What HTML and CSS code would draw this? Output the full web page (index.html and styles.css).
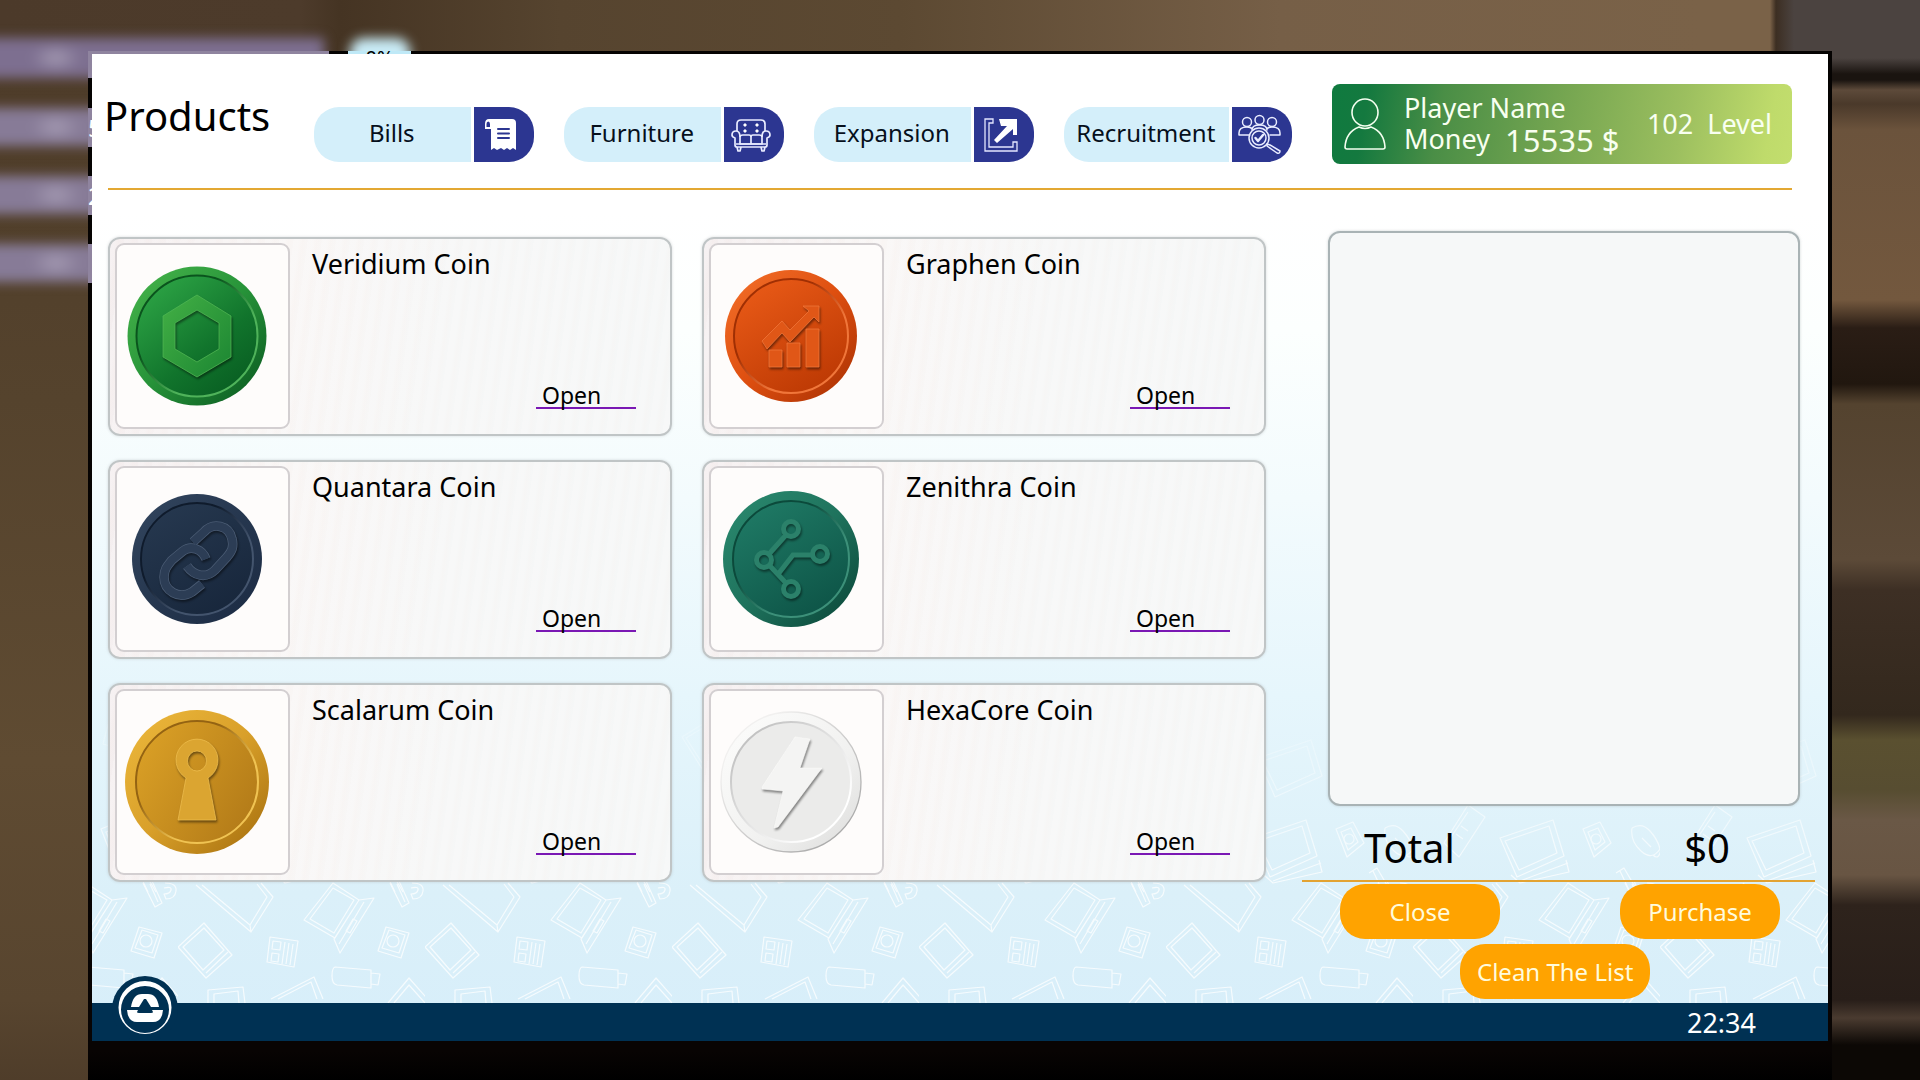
FILE: index.html
```html
<!DOCTYPE html>
<html lang="en">
<head>
<meta charset="utf-8">
<meta name="viewport" content="width=device-width, initial-scale=1">
<title>Products</title>
<link rel="stylesheet" href="styles.css">
</head>
<body>
<div class="scene">
  <div class="hud" aria-hidden="true">
    <div class="hud-glow hud-glow-1"></div>
    <div class="hud-glow hud-glow-2"></div>
    <div class="hud-glow hud-glow-3"></div>
    <div class="hud-glow hud-glow-4"></div>
    <div class="hud-glow hud-percent-glow"></div>
  </div>
  <div class="frame">
    <div class="hud-edge" aria-hidden="true">
      <div class="hud-bar hud-bar-1"></div>
      <div class="hud-bar hud-bar-2">5</div>
      <div class="hud-bar hud-bar-3">2</div>
      <div class="hud-bar hud-bar-4"></div>
      <div class="hud-percent">0%</div>
    </div>
    <div class="window">
      <svg class="wallpaper" aria-hidden="true">
        <defs>
          <pattern id="gadgets" width="247" height="320" patternUnits="userSpaceOnUse" x="86" y="0">
            <g fill="none" stroke="#fff" stroke-width="1.2" stroke-linejoin="round">
              <path d="M26 240 0 264l28 31 26-23zM26 245 5 264l20 23 21-20zM28 290l22-21"/>
              <path d="M18 202l55 47 22-35-12-14M24 202l48 40 17-28-10-13M73 249l-1-7"/>
              <path d="M92 254l28 4-4 26-27-5zM95 258l8 1-1 8-8-1zM107 259l-3 22M111 260l-3 21M115 261l-3 21M94 270l7 1-1 8-7-1z"/>
              <path d="M155 200l-29 37 31 18 24-38zM181 217l15-2-34 55-6-14zM155 205l-23 31 24 14 20-33zM186 219l-25 42M175 236l4 2-7 12-4-2z"/>
              <path d="M157 284l36 3v18l-34-3q-5-1-5-9t3-9zM193 290l9 1-2 11-7-1z"/>
              <path d="M208 244l23 6-8 25-23-7zM211 247l16 5-6 18-17-5z"/><circle cx="215" cy="258" r="6"/>
              <path d="M212 200l12 24 7-4-10-22M219 201l8 18M234 200q12 0 11 8t-10 8l-2-5q6 0 7-4t-7-2"/>
              <path d="M30 320v-13l35-3 2 16M36 320v-9l24-3 1 12"/>
              <path d="M93 316l43-22 9 22M100 316l33-17 6 17"/>
              <path d="M210 320l21-25 22 25M216 320l15-18 16 18"/>
              <path d="M87 155l53-18 11 36-47 21zM92 158l44-15 8 27-38 17zM107 198l48-18M98 192l9 8 49-11-3-12"/>
              <path d="M170 146l17-7 11 21-17 14zM175 149l10-4 7 14-10 8z"/><circle cx="183" cy="156" r="5"/>
              <path d="M219 145q10-6 18 3t10 18q-8 12-19 2t-9-23M240 172q6 6 8-6M229 155l9 9"/>
              <path d="M31 160l24-38 17 12-26 40zM36 157l19-28M48 143l7 5M43 151l7 5"/>
              <path d="M203 190l8-5 14 24M207 188l10 21"/>
              <path d="M92 75l53-18 11 36-47 21zM97 78l44-15 8 27-38 17z"/>
              <path d="M10 54l32-20 24 36-32 22zM14 55l27-16 19 30-26 17z"/>
              <path d="M180 30l36 12-8 30-36-11zM184 35l27 9-6 23-27-8z"/>
              <path d="M200 90l32-8-4 10-27 8zM203 106l32-8M206 112l30-7"/>
            </g>
          </pattern>
        </defs>
        <rect width="100%" height="320" fill="url(#gadgets)"/>
      </svg>
      <div class="content">
        <header class="header">
          <h1 class="title">Products</h1>
          <nav class="tabs">
            <button class="tab" type="button">
              <span class="tab-label">Bills</span>
              <svg class="tab-icon" viewBox="0 0 60 55" aria-hidden="true">
                <path fill="#fff" d="M14 12h24q4 0 4 4v27l-3-2-3 2-3-2-3 2-3-2-4 2-3-2-3 2V22h-6v-5q0-5 4-5z"/>
                <path d="M12.500 20v-3q0-2.500 1.700-2.500T16 17v3z" fill="#2c3691"/>
                <path d="M24 22h11M24 26.500h11M24 31h11" stroke="#2c3691" stroke-width="2" stroke-linecap="round"/>
              </svg>
            </button>
            <button class="tab" type="button">
              <span class="tab-label">Furniture</span>
              <svg class="tab-icon" viewBox="0 0 60 55" aria-hidden="true" fill="none" stroke="#e9ecff" stroke-width="1.700" stroke-linejoin="round">
                <path d="M13 24v-7q0-4 4-4h20q4 0 4 4v7M27 29v8M16 30q0-2 3-2h6q2 0 2 2 0-2 2-2h6q3 0 3 2v7H16z"/>
                <path d="M16 30q0-6-4-6-4 0-4 4 0 2 3 3v7q0 2 2 2h28q2 0 2-2v-7q3-1 3-3 0-4-4-4t-4 6M13 40l1 4h2l1-4M37 40l1 4h2l1-4M12 37h30"/>
                <path fill="#fff" stroke="none" d="M19 18l2-2 2 2-2 2zM31 18l2-2 2 2-2 2zM19 24l2-2 2 2-2 2zM31 24l2-2 2 2-2 2z"/>
              </svg>
            </button>
            <button class="tab" type="button">
              <span class="tab-label">Expansion</span>
              <svg class="tab-icon" viewBox="0 0 60 55" aria-hidden="true">
                <path d="M19 12h-8v32h32v-9h-4v5H15V16h4z" fill="none" stroke="#e3e6ff" stroke-width="1.300"/>
                <path fill="#fff" d="M25 12h18v16h-4v-6L23 36l-3-3 13-14h-6z"/>
              </svg>
            </button>
            <button class="tab" type="button">
              <span class="tab-label">Recruitment</span>
              <svg class="tab-icon" viewBox="0 0 60 55" aria-hidden="true" fill="none" stroke="#e9ecff" stroke-width="1.500" stroke-linecap="round" stroke-linejoin="round">
                <circle cx="27.500" cy="13" r="4.500"/><circle cx="15" cy="15" r="4.500"/><circle cx="40" cy="15" r="4.500"/>
                <path d="M17 28H7v-2q0-6 8-6 4 0 5 2M38 28h10v-2q0-6-8-6-4 0-5 2M20 23q0-5 7.500-5t7.500 5"/>
                <circle cx="27" cy="31" r="10"/><circle cx="27" cy="31" r="7"/>
                <path d="M35 37l3 1 10 6q0 3-3 2l-10-7z"/><path d="M23.500 31l2.500 3 5-6" stroke-width="2.500"/>
              </svg>
            </button>
          </nav>
          <section class="player" aria-label="Player">
            <svg class="avatar" viewBox="0 0 44 54" aria-hidden="true" fill="none" stroke="#f4fff0" stroke-width="1.600">
              <ellipse cx="22" cy="15.500" rx="13" ry="13.500"/>
              <path d="M16 30q-13 5-14 20 0 2 2 2h36q2 0 2-2-1-15-14-20-6 3-12 0z"/>
            </svg>
            <div class="player-info">
              <span>Player Name</span>
              <span class="money">Money <strong class="amount">15535 $</strong></span>
            </div>
            <div class="level"><span>102</span><span>Level</span></div>
          </section>
        </header>
        <hr class="rule">
        <main class="main">
          <section class="products" aria-label="Coins">
            <article class="card">
              <div class="thumb">
                <svg class="coin" viewBox="-75 -75 150 150" aria-hidden="true">
                  <defs>
                    <linearGradient id="g1" x1="0" y1="0" x2="1" y2="1"><stop offset="0" stop-color="#48b64c"/><stop offset=".5" stop-color="#279339"/><stop offset="1" stop-color="#08551f"/></linearGradient>
                    <linearGradient id="g1b" x1=".1" y1="0" x2=".9" y2="1"><stop offset="0" stop-color="#2fa847"/><stop offset=".6" stop-color="#11742c"/><stop offset="1" stop-color="#075a20"/></linearGradient>
                    <linearGradient id="g1r" x1="0" y1="0" x2="1" y2="1"><stop offset=".35" stop-color="#0a541d"/><stop offset=".65" stop-color="#4fb35a"/></linearGradient>
                    <linearGradient id="g1e" x1="0" y1="0" x2="1" y2="1"><stop offset="0" stop-color="#43b045"/><stop offset="1" stop-color="#1b8532"/></linearGradient>
                  </defs>
                  <circle r="69.500" fill="url(#g1)"/>
                  <circle class="rim" r="60.500" fill="url(#g1b)" stroke="url(#g1r)"/>
                  <path class="emblem" fill="url(#g1e)" fill-rule="evenodd" stroke="#4fb653" stroke-width=".8" d="M0-41 34-20V21L0 41-34 21V-20zM0-26-22-13V13L0 26 22 13V-13z"/>
                </svg>
              </div>
              <div class="info"><h2 class="name">Veridium Coin</h2><a class="open" href="#veridium">Open</a></div>
            </article>
            <article class="card">
              <div class="thumb">
                <svg class="coin" viewBox="-75 -75 150 150" aria-hidden="true">
                  <defs>
                    <linearGradient id="g2" x1="0" y1="0" x2="1" y2="1"><stop offset="0" stop-color="#f4712b"/><stop offset=".5" stop-color="#de4f10"/><stop offset="1" stop-color="#a62f02"/></linearGradient>
                    <linearGradient id="g2b" x1=".2" y1="0" x2=".8" y2="1"><stop offset="0" stop-color="#e95a17"/><stop offset="1" stop-color="#bb3803"/></linearGradient>
                    <linearGradient id="g2r" x1="0" y1="0" x2="1" y2="1"><stop offset=".35" stop-color="#a02f03"/><stop offset=".65" stop-color="#f0763a"/></linearGradient>
                  </defs>
                  <circle r="66" fill="url(#g2)"/>
                  <circle class="rim" r="57" fill="url(#g2b)" stroke="url(#g2r)"/>
                  <g class="emblem" fill="#e05717" stroke="#f0763a" stroke-width=".8">
                    <path d="M-22 14h13v17h-13zM-4 7h13v24H-4zM15-7h13v38H15z"/>
                    <path d="M-29 5-9-15l8 9 19-19-6-5h16v16l-5-5-24 25-8-9-15 16z"/>
                  </g>
                </svg>
              </div>
              <div class="info"><h2 class="name">Graphen Coin</h2><a class="open" href="#graphen">Open</a></div>
            </article>
            <article class="card">
              <div class="thumb">
                <svg class="coin" viewBox="-75 -75 150 150" aria-hidden="true">
                  <defs>
                    <linearGradient id="g3" x1="0" y1="0" x2="1" y2="1"><stop offset="0" stop-color="#33465f"/><stop offset=".5" stop-color="#26374f"/><stop offset="1" stop-color="#1b2a42"/></linearGradient>
                    <linearGradient id="g3b" x1=".2" y1="0" x2=".8" y2="1"><stop offset="0" stop-color="#26384f"/><stop offset="1" stop-color="#17263b"/></linearGradient>
                    <linearGradient id="g3r" x1="0" y1="0" x2="1" y2="1"><stop offset=".35" stop-color="#0f1b2c"/><stop offset=".65" stop-color="#43546d"/></linearGradient>
                  </defs>
                  <circle r="65" fill="url(#g3)"/>
                  <circle class="rim" r="56" fill="url(#g3b)" stroke="url(#g3r)"/>
                  <g class="emblem" fill="none">
                    <g stroke="#4b5c74" stroke-width="9.500"><path d="M-4-17 7-27C16-37 32-34 35-20 37-12 35-8 30-2L18 11C9 20-3 17-10 7"/><path d="M5 25-5 33C-18 41-33 32-33 18-33 10-29 6-25 1L-14-8C-6-14 5-10 9 0"/></g>
                    <g stroke="#2c3d55" stroke-width="8"><path d="M-4-17 7-27C16-37 32-34 35-20 37-12 35-8 30-2L18 11C9 20-3 17-10 7"/><path d="M5 25-5 33C-18 41-33 32-33 18-33 10-29 6-25 1L-14-8C-6-14 5-10 9 0"/></g>
                  </g>
                </svg>
              </div>
              <div class="info"><h2 class="name">Quantara Coin</h2><a class="open" href="#quantara">Open</a></div>
            </article>
            <article class="card">
              <div class="thumb">
                <svg class="coin" viewBox="-75 -75 150 150" aria-hidden="true">
                  <defs>
                    <linearGradient id="g4" x1="0" y1="0" x2="1" y2="1"><stop offset="0" stop-color="#2b8b70"/><stop offset=".5" stop-color="#1f735d"/><stop offset="1" stop-color="#094336"/></linearGradient>
                    <linearGradient id="g4b" x1=".2" y1="0" x2=".8" y2="1"><stop offset="0" stop-color="#1f7a65"/><stop offset="1" stop-color="#0d5346"/></linearGradient>
                    <linearGradient id="g4r" x1="0" y1="0" x2="1" y2="1"><stop offset=".35" stop-color="#0b4a3b"/><stop offset=".65" stop-color="#3c9079"/></linearGradient>
                  </defs>
                  <circle r="68" fill="url(#g4)"/>
                  <circle class="rim" r="58" fill="url(#g4b)" stroke="url(#g4r)"/>
                  <g class="emblem" fill="none" stroke="#2b816a" stroke-width="5">
                    <path d="M-22-5-5-24M-21 7-5 24M-12 14 2-4H21"/>
                    <circle cy="-30" r="7.500"/><circle cx="29" cy="-5" r="7.500"/><circle cx="-27" cy="1" r="7.500"/><circle cy="30" r="7.500"/>
                  </g>
                </svg>
              </div>
              <div class="info"><h2 class="name">Zenithra Coin</h2><a class="open" href="#zenithra">Open</a></div>
            </article>
            <article class="card">
              <div class="thumb">
                <svg class="coin" viewBox="-75 -75 150 150" aria-hidden="true">
                  <defs>
                    <linearGradient id="g5" x1="0" y1="0" x2="1" y2="1"><stop offset="0" stop-color="#edb93c"/><stop offset=".5" stop-color="#d9a02a"/><stop offset="1" stop-color="#a36c0c"/></linearGradient>
                    <linearGradient id="g5b" x1="0" y1=".2" x2="1" y2=".8"><stop offset="0" stop-color="#daa026"/><stop offset="1" stop-color="#b27a18"/></linearGradient>
                    <linearGradient id="g5r" x1="0" y1="0" x2="1" y2="1"><stop offset=".35" stop-color="#946312"/><stop offset=".65" stop-color="#f0c352"/></linearGradient>
                  </defs>
                  <circle r="72" fill="url(#g5)"/>
                  <circle class="rim" r="61" fill="url(#g5b)" stroke="url(#g5r)"/>
                  <path class="emblem" fill="#dba531" fill-rule="evenodd" stroke="#edbd4c" stroke-width=".8" d="M-11-4A21 21 0 1 1 11-4L19 38H-19zM0-31A9.500 10 0 0 0 0-11 9.500 10 0 0 0 0-31z"/>
                </svg>
              </div>
              <div class="info"><h2 class="name">Scalarum Coin</h2><a class="open" href="#scalarum">Open</a></div>
            </article>
            <article class="card">
              <div class="thumb">
                <svg class="coin" viewBox="-75 -75 150 150" aria-hidden="true">
                  <defs>
                    <linearGradient id="g6" x1="0" y1="0" x2="1" y2="1"><stop offset="0" stop-color="#fdfdfc"/><stop offset=".6" stop-color="#f1f1f0"/><stop offset="1" stop-color="#dcdcdb"/></linearGradient>
                    <linearGradient id="g6s" x1="0" y1="0" x2="1" y2="1"><stop offset=".2" stop-color="#f1f0ef"/><stop offset="1" stop-color="#9b9b9b"/></linearGradient>
                    <linearGradient id="g6r" x1="0" y1="0" x2="1" y2="1"><stop offset="0" stop-color="#b5b5b5"/><stop offset=".8" stop-color="#fff"/></linearGradient>
                  </defs>
                  <circle r="70" fill="url(#g6)" stroke="url(#g6s)" stroke-width="1.300"/>
                  <circle class="rim" r="60" fill="#ebebea" stroke="url(#g6r)"/>
                  <path class="emblem" fill="#f4f4f3" stroke="#fbfbfa" stroke-width=".6" d="M4-45 19-43 9-14H31L-13 45-17 46-8 9-29 7V5z"/>
                </svg>
              </div>
              <div class="info"><h2 class="name">HexaCore Coin</h2><a class="open" href="#hexacore">Open</a></div>
            </article>
          </section>
          <aside class="cart" aria-label="Cart">
            <div class="cart-list"></div>
            <div class="total"><span>Total</span><span>$0</span></div>
            <div class="cart-actions">
              <button class="btn" type="button">Close</button>
              <button class="btn" type="button">Purchase</button>
            </div>
            <button class="btn btn-clean" type="button">Clean The List</button>
          </aside>
        </main>
        <footer class="taskbar">
          <button class="start" type="button" aria-label="Start">
            <svg viewBox="-33 -33 66 66" aria-hidden="true">
              <circle r="33" fill="#003153"/>
              <path fill="#fff" fill-rule="evenodd" d="M0-28A26 26 0 0 1 0 25 26 26 0 0 1 0-28zM0-23A24 23.500 0 0 0 0 24 24 23.500 0 0 0 0-23z"/>
              <path fill="#fff" d="M-14-2Q-12-15-3-15H3Q12-15 14-2H6L1-10H-1L-6-2zM-18 1H-7L-8 3Q-8 4-6 4H6Q8 4 8 3L7 1H18Q17 13 8 13H-8Q-17 13-18 1z"/>
            </svg>
          </button>
          <time class="clock">22:34</time>
        </footer>
      </div>
    </div>
  </div>
</div>
</body>
</html>
```
FILE: styles.css
```css
*, *::before, *::after { box-sizing: border-box; }

body {
  margin: 0;
  font-family: "Noto Sans", "Open Sans", sans-serif;
  color: #000;
  background: #0a0705;
}

h1, h2 { margin: 0; font-weight: 400; }

button {
  font: inherit;
  border: 0;
  padding: 0;
  cursor: pointer;
}

/* Blurred room behind the in-game monitor */
.scene {
  position: relative;
  min-height: 100vh;
  padding: 51px 88px 0;
  overflow: hidden;
  background:
    linear-gradient(180deg, #4b4340 0, #4b4340 58px, #1a1410 74px, #1a1410 80px, #5d4a3a 90px, #4a392a 104px, #6b533c 130px, #73583e 300px, #2a1d15 328px, #21170f 384px, #54432f 404px, #5c4a38 560px, #3d2f24 590px, #33281d 715px, #5a5030 740px, #574d31 790px, #6a5846 820px, #685543 875px, #2e231c 905px, #281e19 1000px, #4a3b30 1018px, #0c0805 1045px) right 0 top 0 / 92px 100% no-repeat,
    linear-gradient(90deg, #4c3a2c00, #3c2e22 6px, #4b4340 24px) right 0 top 0 / 150px 51px no-repeat,
    linear-gradient(90deg, #4c3a2a 0, #4d3b2b 300px, #453423 340px, #56442f 560px, #5c4932 900px, #765f47 1280px, #7a6248 1700px) left top / 100% 52px no-repeat,
    linear-gradient(180deg, #4d3b29, #55432d 400px, #5f4b32 760px, #58452f 1000px, #4f3d2a) left top / 88px 100% no-repeat,
    #0a0705;
}

.hud-glow {
  position: absolute;
  left: -20px;
  width: 120px;
  height: 38px;
  background: #877b97 radial-gradient(ellipse 26px 14px at 76px 50%, #a59bb3, #a59bb300);
  filter: blur(6px);
}
.hud-glow-1 { top: 38px; width: 344px; height: 40px; background-color: #7d6f90; }
.hud-glow-2 { top: 108px; }
.hud-glow-3 { top: 176px; }
.hud-glow-4 { top: 244px; }
.hud-percent-glow { left: 350px; top: 38px; width: 60px; height: 34px; border-radius: 14px; background: #c9ecf7; }

.frame {
  position: relative;
  padding: 3px 4px 39px;
  background: linear-gradient(180deg, #050302, #080403 1000px, #000);
}

/* Status bars that show along the monitor's edge */
.hud-edge { position: absolute; inset: 0; overflow: hidden; }
.hud-bar {
  position: absolute;
  left: 0;
  width: 40px;
  height: 39px;
  background: #8f849f;
  color: #fff;
  font-size: 24px;
  line-height: 39px;
}
.hud-bar-1 { top: 0; width: 241px; height: 27px; }
.hud-bar-2 { top: 57px; }
.hud-bar-3 { top: 125px; }
.hud-bar-4 { top: 193px; }
.hud-percent {
  position: absolute;
  left: 260px;
  top: 0;
  width: 63px;
  height: 24px;
  background: #bfe9f7;
  font-size: 20px;
  line-height: 14px;
  text-align: center;
}

.window {
  position: relative;
  display: grid;
  min-height: calc(100vh - 93px);
  background: linear-gradient(180deg, #fff 0, #fff 16%, #fcfffe 28%, #f3fbfd 45%, #e6f6fc 65%, #dbf0f9 85%, #d7eefa 100%);
}
.wallpaper {
  grid-area: 1 / 1;
  align-self: end;
  width: 100%;
  height: 320px;
  margin-bottom: 38px;
  opacity: .75;
  mask-image: linear-gradient(180deg, transparent, #000 60%);
}
.content {
  grid-area: 1 / 1;
  position: relative;
  display: flex;
  flex-direction: column;
  min-width: 0;
}

.header {
  display: flex;
  align-items: flex-start;
  height: 134px;
  padding: 30px 36px 0 12px;
}
.title {
  margin-top: 5px;
  font-size: 40px;
  line-height: 54px;
}
.tabs {
  display: flex;
  gap: 30px;
  margin: 23px 0 0 44px;
}
.tab {
  display: flex;
  gap: 3px;
  min-width: 220px;
  height: 55px;
  background: none;
  color: #06101c;
}
.tab-label {
  flex: 1;
  padding: 0 14px 0 12px;
  border-radius: 25px 0 0 25px;
  background: #d4effa;
  font-size: 24px;
  line-height: 52px;
  height: 55px;
}
.tab-icon {
  width: 60px;
  height: 55px;
  border-radius: 0 25px 25px 0;
  background: #2c3691;
}

.player {
  display: flex;
  align-items: center;
  width: 460px;
  height: 80px;
  margin-left: auto;
  padding: 0 20px 0 11px;
  border-radius: 8px;
  background: linear-gradient(100deg, #0f7a3f 0, #14793f 8%, #4a8e46 24%, #76a651 50%, #9cbf5f 75%, #bfdb6b 94%, #c3de6e);
  color: #f8fff0;
  font-size: 27px;
  line-height: 31px;
}
.avatar { width: 44px; height: 54px; }
.player-info {
  display: flex;
  flex-direction: column;
  margin-left: 17px;
  white-space: nowrap;
}
.money { display: flex; gap: 15px; }
.amount { font-size: 31px; font-weight: 400; line-height: 34px; }
.level {
  display: flex;
  gap: 14px;
  margin-left: auto;
  padding-bottom: 2px;
}

.rule {
  width: auto;
  height: 2px;
  margin: 0 36px 0 16px;
  border: 0;
  background: #e3a832;
}

.main {
  flex: 1;
  display: grid;
  grid-template-columns: minmax(0, 1fr) 513px;
  gap: 36px;
  padding: 41px 13px 4px 16px;
}
.products {
  display: grid;
  grid-template-columns: 1fr 1fr;
  gap: 24px 30px;
  align-content: start;
  padding-top: 6px;
}
.card {
  display: flex;
  gap: 22px;
  min-height: 199px;
  padding: 4px 34px 5px 5px;
  border: 2px solid #c0c5c6;
  border-radius: 12px;
  background:
    repeating-linear-gradient(98deg, #ffffff2e 0, #ffffff2e 5px, #fbeee81f 9px, #ffffff00 14px),
    linear-gradient(100deg, #f4eeef 0, #f9f6f5 30%, #f6f7f7 60%, #f5f7f7);
  box-shadow: 0 0 3px #9fa8aa66;
}
.thumb {
  display: flex;
  align-items: center;
  justify-content: center;
  width: 175px;
  padding-right: 11px;
  border: 2px solid #d3cfd1;
  border-radius: 9px;
  background: #fefcfb;
}
.coin { width: 150px; height: 150px; }
.rim { stroke-width: 2; }
.emblem { filter: drop-shadow(1px 2px 1px rgba(0, 0, 0, .45)); }
.info {
  flex: 1;
  display: flex;
  flex-direction: column;
  justify-content: space-between;
  padding: 3px 0 20px;
}
.name { font-size: 27px; line-height: 36px; }
.open {
  align-self: flex-end;
  width: 100px;
  padding-left: 6px;
  border-bottom: 2px solid #7a18b4;
  color: #000;
  font-size: 23px;
  line-height: 24px;
  text-decoration: none;
}

.cart { display: flex; flex-direction: column; }
.cart-list {
  height: 575px;
  margin: 0 15px 0 26px;
  border: 2px solid #a9b3b5;
  border-radius: 12px;
  background: #f6f8f8;
  box-shadow: 0 0 3px #8f9a9d66;
}
.total {
  display: flex;
  justify-content: space-between;
  height: 76px;
  padding: 15px 85px 0 62px;
  border-bottom: 2px solid #e3a332;
  font-size: 40px;
  line-height: 54px;
}
.cart-actions {
  display: flex;
  justify-content: space-between;
  padding: 2px 35px 5px 38px;
}
.btn {
  min-width: 160px;
  height: 55px;
  padding: 0 17px;
  border-radius: 25px;
  background: #ffa300;
  color: #fffbdc;
  font-size: 24px;
}
.btn-clean { align-self: flex-start; margin-left: 158px; }

.taskbar {
  position: relative;
  display: flex;
  justify-content: flex-end;
  height: 38px;
  padding-right: 72px;
  background: #003153;
}
.start {
  position: absolute;
  left: 20px;
  top: -27px;
  width: 66px;
  height: 65px;
  overflow: hidden;
  background: none;
}
.start svg { display: block; width: 66px; height: 66px; }
.clock { color: #fff; font-size: 27px; line-height: 40px; }
```
